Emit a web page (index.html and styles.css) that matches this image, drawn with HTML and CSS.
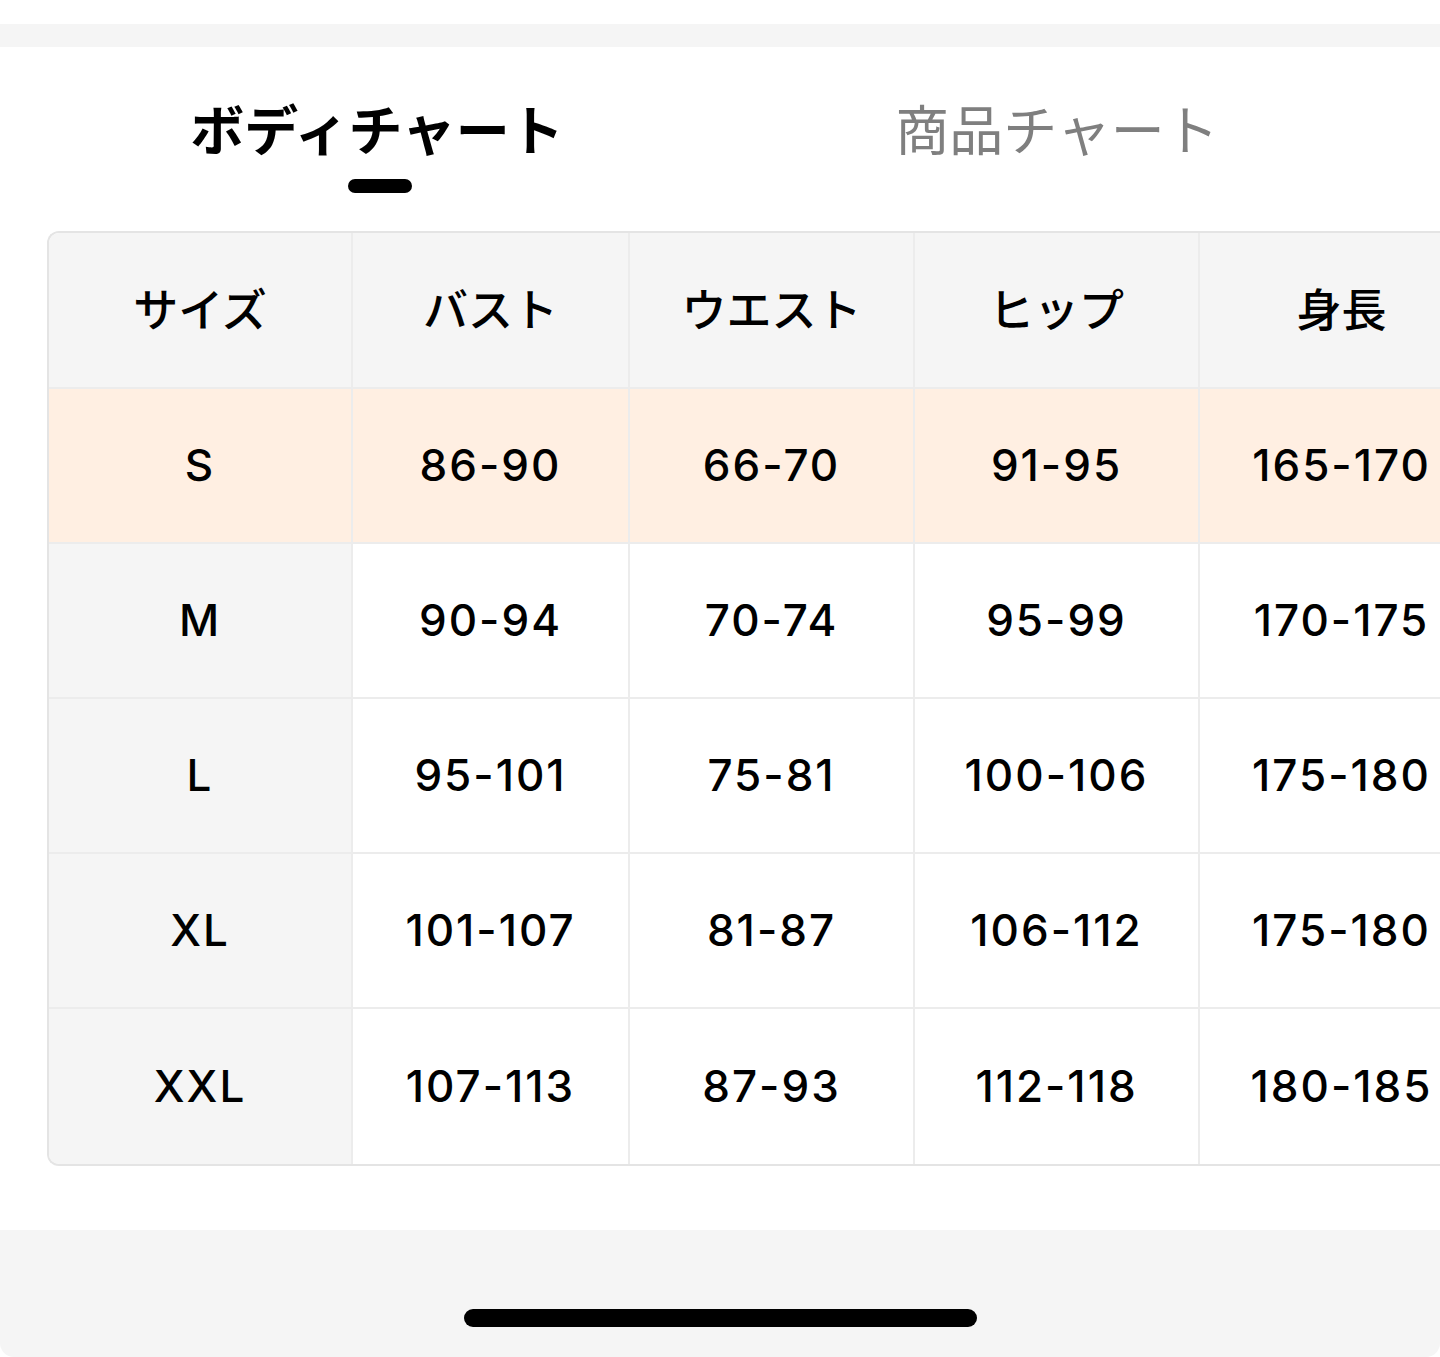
FILE: index.html
```html
<!DOCTYPE html>
<html lang="ja">
<head>
<meta charset="utf-8">
<title>サイズチャート</title>
<link rel="stylesheet" href="styles.css">
</head>
<body>
<div class="page">
  <div class="top-space"></div>
  <div class="strip"></div>
  <div class="tabs">
    <div class="tab tab-active">
      <span class="tab-label">ボディチャート</span>
      <span class="tab-indicator"></span>
    </div>
    <div class="tab">
      <span class="tab-label">商品チャート</span>
    </div>
  </div>
  <div class="table-scroll">
    <div class="chart">
      <div class="cell head first">サイズ</div>
      <div class="cell head">バスト</div>
      <div class="cell head">ウエスト</div>
      <div class="cell head">ヒップ</div>
      <div class="cell head">身長</div>

      <div class="cell num hl first">S</div>
      <div class="cell num hl">86-90</div>
      <div class="cell num hl">66-70</div>
      <div class="cell num hl">91-95</div>
      <div class="cell num hl">165-170</div>

      <div class="cell num first">M</div>
      <div class="cell num">90-94</div>
      <div class="cell num">70-74</div>
      <div class="cell num">95-99</div>
      <div class="cell num">170-175</div>

      <div class="cell num first">L</div>
      <div class="cell num">95-101</div>
      <div class="cell num">75-81</div>
      <div class="cell num">100-106</div>
      <div class="cell num">175-180</div>

      <div class="cell num first">XL</div>
      <div class="cell num">101-107</div>
      <div class="cell num">81-87</div>
      <div class="cell num">106-112</div>
      <div class="cell num">175-180</div>

      <div class="cell num first last">XXL</div>
      <div class="cell num last">107-113</div>
      <div class="cell num last">87-93</div>
      <div class="cell num last">112-118</div>
      <div class="cell num last">180-185</div>
    </div>
  </div>
  <div class="home-area">
    <span class="home-bar"></span>
  </div>
</div>
</body>
</html>
```

FILE: styles.css
```css
html, body {
  margin: 0;
  padding: 0;
  background: #ffffff;
}

body {
  width: 1440px;
  height: 1357px;
  overflow: hidden;
  font-family: "Noto Sans CJK JP", "Noto Sans", sans-serif;
  color: #000;
}

.page {
  display: flex;
  flex-direction: column;
  width: 1440px;
  height: 1357px;
}

.top-space {
  height: 24px;
}

.strip {
  height: 23px;
  background: #f5f5f5;
}

.tabs {
  display: flex;
  padding: 54px 43px 0 37px;
}

.tab {
  flex: 1;
  display: flex;
  flex-direction: column;
  align-items: center;
}

.tab-label {
  font-size: 54px;
  line-height: 54px;
  color: #7f7f7f;
  font-weight: 400;
  white-space: nowrap;
}

.tab-active .tab-label {
  color: #000;
  font-weight: 700;
}

.tab-indicator {
  margin-top: 24px;
  width: 64px;
  height: 14px;
  border-radius: 7px;
  background: #000;
  transform: translateX(3px);
}

.tab:not(.tab-active) .tab-label {
  margin-bottom: 38px;
}

.table-scroll {
  margin-top: 38px;
  padding-left: 47px;
  overflow: hidden;
}

.chart {
  display: grid;
  grid-template-columns: 304px 277px 285px 285px 285px;
  grid-template-rows: 156px repeat(5, 155px);
  width: 1436px;
  border: 2px solid #e4e4e4;
  border-right: none;
  border-radius: 12px 0 0 12px;
  overflow: hidden;
  box-sizing: content-box;
}

.cell {
  display: flex;
  align-items: center;
  justify-content: center;
  border-right: 2px solid #ececec;
  border-bottom: 2px solid #ececec;
  background: #ffffff;
  white-space: nowrap;
}

.cell.last {
  border-bottom: none;
}

.head {
  background: #f5f5f5;
  font-family: "Noto Sans CJK JP", sans-serif;
  font-size: 45px;
  font-weight: 500;
  padding-bottom: 6px;
}

.num {
  font-family: "Inter", "Liberation Sans", sans-serif;
  font-size: 44px;
  font-weight: 500;
  letter-spacing: 2px;
  padding-bottom: 2px;
}

.first {
  background: #f5f5f5;
}

.hl {
  background: #ffefe2;
}

.home-area {
  margin-top: 64px;
  flex: 1;
  background: #f5f5f5;
  border-radius: 0 0 14px 14px;
  display: flex;
  justify-content: center;
  padding-top: 79px;
  padding-left: 1px;
}

.home-bar {
  width: 513px;
  height: 18px;
  border-radius: 9px;
  background: #000;
}
```
